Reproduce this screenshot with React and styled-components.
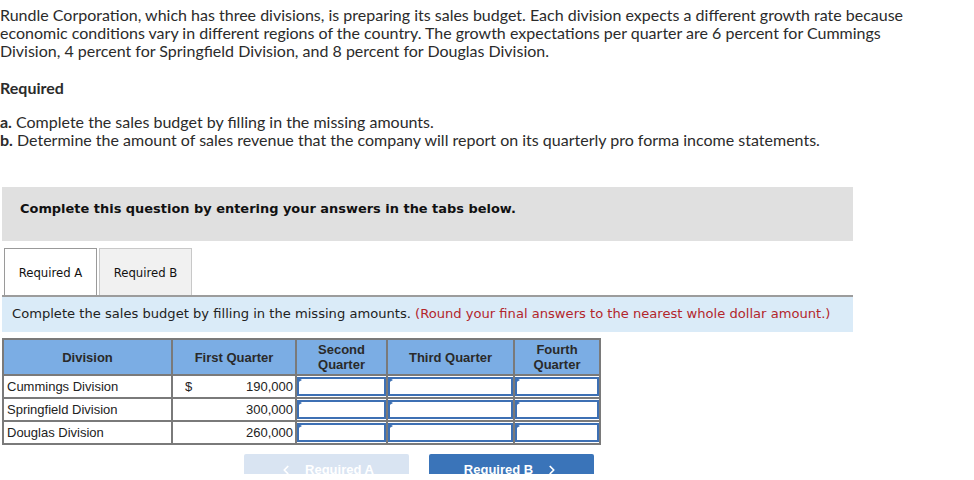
import React from "react";
import styled, { createGlobalStyle } from "styled-components";
import { ChevronLeft, ChevronRight } from "lucide-react";

const Global = createGlobalStyle`
  html, body { margin: 0; padding: 0; background: #fff; }
  body { font-family: "Open Sans", Arial, sans-serif; color: #2b2b2b; }
  * { box-sizing: border-box; }
`;

const Page = styled.div`
  width: 974px;
  height: 480px;
  overflow: hidden;
  padding-top: 6px;
`;

const Intro = styled.p`
  margin: 0;
  font-family: "Lato", "Open Sans", sans-serif;
  font-size: 16px;
  line-height: 18px;
  color: #2b2b2b;
  white-space: nowrap;
`;

const Heading = styled.h3`
  margin: 19px 0 0;
  font-family: "Lato", "Open Sans", sans-serif;
  font-size: 16px;
  line-height: 18px;
  font-weight: 700;
  color: #2b2b2b;
`;

const Tasks = styled.div`
  margin-top: 16px;
  font-family: "Lato", "Open Sans", sans-serif;
  font-size: 16px;
  line-height: 18px;
  color: #2b2b2b;
  white-space: nowrap;
`;

const Task = styled.div`
  b { font-weight: 700; }
`;

const Prompt = styled.div`
  margin: 38px 0 0 2px;
  width: 851px;
  height: 54px;
  background: #e0e0e0;
  padding: 14px 0 0 18px;
  font-family: "DejaVu Sans", Verdana, sans-serif;
  font-weight: 700;
  font-size: 12.95px;
  line-height: 16px;
  color: #111;
`;

const TabBar = styled.div`
  display: flex;
  gap: 2px;
  margin: 7px 0 0 4px;
  height: 47px;
`;

const Tab = styled.div`
  width: 93px;
  height: 47px;
  display: flex;
  align-items: center;
  justify-content: center;
  padding-top: 2px;
  background: ${(p) => (p.$active ? "#fff" : "#f1f1f1")};
  border: 1px solid ${(p) => (p.$active ? "#9a9a9a" : "#c8c8c8")};
  border-bottom: none;
  font-family: "DejaVu Sans", Verdana, sans-serif;
  font-size: 11.7px;
  color: #111;
`;

const InfoBar = styled.div`
  margin-left: 2px;
  width: 851px;
  height: 37px;
  border-top: 2px solid #9c9c9c;
  background: #daebf8;
  padding: 9px 0 0 10px;
  font-family: "DejaVu Sans", Verdana, sans-serif;
  font-size: 13.1px;
  line-height: 16px;
  color: #222;
  white-space: nowrap;
`;

const Note = styled.span`
  color: #b3262c;
`;

const Table = styled.table`
  margin: 6px 0 0 2px;
  border-collapse: collapse;
  border: 2px solid #7a7a7a;
  font-family: "Liberation Sans", Arial, sans-serif;
  font-size: 13px;
  color: #222;
`;

const Th = styled.th`
  width: ${(p) => p.$w}px;
  height: 36px;
  background: #7badE4;
  border: 2px solid #7a7a7a;
  font-weight: 700;
  font-size: 13px;
  line-height: 15px;
  color: #2a2a2a;
  text-align: center;
  padding: 0 4px;
`;

const Td = styled.td`
  height: 23px;
  border: 2px solid #7a7a7a;
  padding: 0 3px;
  line-height: 19px;
  white-space: nowrap;
`;

const AmountCell = styled.td`
  height: 23px;
  border: 2px solid #7a7a7a;
  padding: 0 2px 0 12px;
`;

const Amount = styled.div`
  display: flex;
  justify-content: space-between;
  line-height: 19px;
`;

const InputCell = styled.td`
  height: 23px;
  border: 2px solid #7a7a7a;
  padding: 0;
`;

const Field = styled.div`
  height: 19px;
  background: #fff;
  border: 2px solid #3d70b4;
  position: relative;
  &::before {
    content: "";
    position: absolute;
    left: -2px;
    top: -2px;
    border-top: 3px solid transparent;
    border-bottom: 3px solid transparent;
    border-left: 5px solid #3d70b4;
  }
`;

const Nav = styled.div`
  display: flex;
  gap: 20px;
  margin: 9px 0 0 244px;
  height: 20px;
  overflow: hidden;
`;

const NavButton = styled.div`
  width: 165px;
  height: 38px;
  border-radius: 2px;
  display: flex;
  justify-content: center;
  align-items: flex-start;
  padding-top: 8px;
  gap: 12px;
  background: ${(p) => (p.$disabled ? "#d9e4f2" : "#3a74b9")};
  color: #fff;
  font-family: "Liberation Sans", Arial, sans-serif;
  font-weight: 700;
  font-size: 13px;
  line-height: 15px;
  svg { margin-top: 1px; }
`;

const rows = [
  ["Cummings Division", "190,000", true],
  ["Springfield Division", "300,000", false],
  ["Douglas Division", "260,000", false],
];

export default function App() {
  return (
    <Page>
      <Global />
      <Intro>
        Rundle Corporation, which has three divisions, is preparing its sales budget. Each division expects a different growth rate because
        <br />
        economic conditions vary in different regions of the country. The growth expectations per quarter are 6 percent for Cummings
        <br />
        Division, 4 percent for Springfield Division, and 8 percent for Douglas Division.
      </Intro>
      <Heading>Required</Heading>
      <Tasks>
        <Task><b>a.</b> Complete the sales budget by filling in the missing amounts.</Task>
        <Task><b>b.</b> Determine the amount of sales revenue that the company will report on its quarterly pro forma income statements.</Task>
      </Tasks>
      <Prompt>Complete this question by entering your answers in the tabs below.</Prompt>
      <TabBar>
        <Tab $active>Required A</Tab>
        <Tab>Required B</Tab>
      </TabBar>
      <InfoBar>
        Complete the sales budget by filling in the missing amounts. <Note>(Round your final answers to the nearest whole dollar amount.)</Note>
      </InfoBar>
      <Table>
        <thead>
          <tr>
            <Th $w={169}>Division</Th>
            <Th $w={124}>First Quarter</Th>
            <Th $w={91}>Second<br />Quarter</Th>
            <Th $w={127}>Third Quarter</Th>
            <Th $w={86}>Fourth<br />Quarter</Th>
          </tr>
        </thead>
        <tbody>
          {rows.map(([name, amt, dollar]) => (
            <tr key={name}>
              <Td>{name}</Td>
              <AmountCell>
                <Amount>
                  <span>{dollar ? "$" : ""}</span>
                  <span>{amt}</span>
                </Amount>
              </AmountCell>
              <InputCell><Field /></InputCell>
              <InputCell><Field /></InputCell>
              <InputCell><Field /></InputCell>
            </tr>
          ))}
        </tbody>
      </Table>
      <Nav>
        <NavButton $disabled><ChevronLeft size={14} strokeWidth={3} /><span>Required A</span></NavButton>
        <NavButton><span>Required B</span><ChevronRight size={14} strokeWidth={3} /></NavButton>
      </Nav>
    </Page>
  );
}
